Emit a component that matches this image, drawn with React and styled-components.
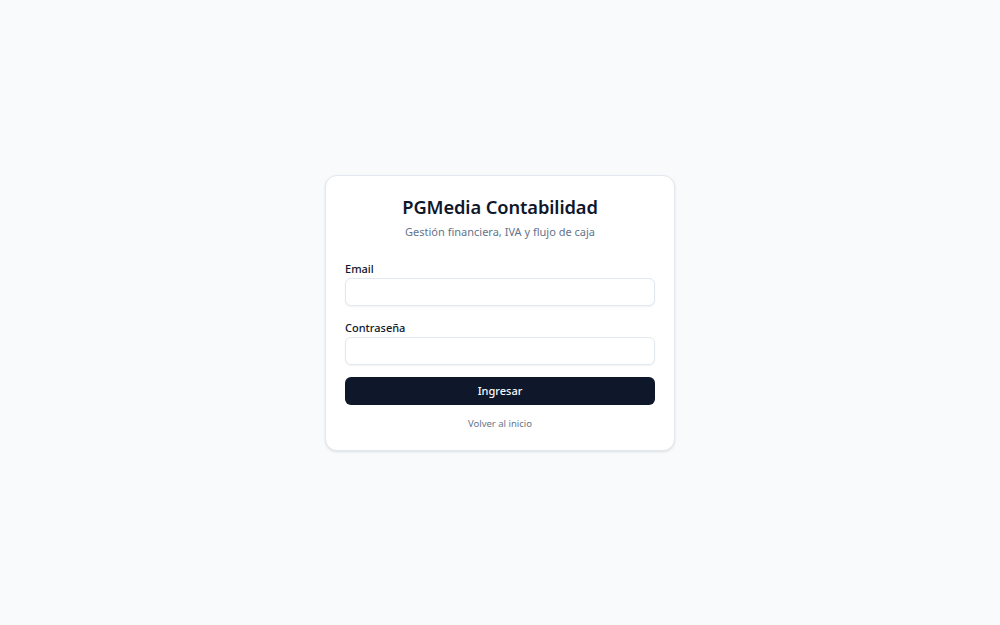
import React from "react";
import styled, { createGlobalStyle } from "styled-components";

const GlobalStyle = createGlobalStyle`
  html, body {
    margin: 0;
    padding: 0;
    background: #f8fafc;
    font-family: "Noto Sans", "Open Sans", sans-serif;
    color: #0f172a;
  }
  * {
    box-sizing: border-box;
  }
`;

const Page = styled.div`
  min-height: 625px;
  display: flex;
  align-items: center;
  justify-content: center;
`;

const Card = styled.form`
  width: 350px;
  background: #ffffff;
  border: 1px solid #e2e8f0;
  border-radius: 12px;
  box-shadow: 0 1px 3px rgba(15, 23, 42, 0.08), 0 1px 2px rgba(15, 23, 42, 0.04);
  padding: 17px 19px 18px;
  display: flex;
  flex-direction: column;
`;

const Header = styled.div`
  text-align: center;
  margin-bottom: 21px;
`;

const Title = styled.h1`
  margin: 0;
  font-size: 18.3px;
  line-height: 28px;
  font-weight: 600;
  letter-spacing: -0.1px;
  color: #0f172a;
`;

const Subtitle = styled.p`
  margin: 3px 0 0;
  font-size: 11px;
  line-height: 16px;
  color: #64748b;
`;

const Field = styled.div`
  display: flex;
  flex-direction: column;
  gap: 1px;
  margin-bottom: ${(p) => p.$gap || 14}px;
`;

const Label = styled.label`
  font-size: 11px;
  line-height: 16px;
  font-weight: 500;
  color: #0f172a;
`;

const Input = styled.input`
  height: 28px;
  width: 100%;
  border: 1px solid #e2e8f0;
  border-radius: 6px;
  background: #ffffff;
  box-shadow: 0 1px 2px rgba(15, 23, 42, 0.05);
  padding: 0 10px;
  font-family: inherit;
  font-size: 11px;
  outline: none;
`;

const Button = styled.button`
  height: 28px;
  width: 100%;
  border: none;
  border-radius: 6px;
  background: #0f172a;
  color: #f8fafc;
  font-family: inherit;
  font-size: 11px;
  font-weight: 500;
  cursor: pointer;
`;

const BackLink = styled.a`
  margin-top: 11px;
  text-align: center;
  font-size: 9.5px;
  line-height: 16px;
  color: #64748b;
  text-decoration: none;
`;

export default function App() {
  return (
    <>
      <GlobalStyle />
      <Page>
        <Card onSubmit={(e) => e.preventDefault()}>
          <Header>
            <Title>PGMedia Contabilidad</Title>
            <Subtitle>Gestión financiera, IVA y flujo de caja</Subtitle>
          </Header>
          <Field>
            <Label htmlFor="email">Email</Label>
            <Input id="email" type="email" />
          </Field>
          <Field $gap={12}>
            <Label htmlFor="password">Contraseña</Label>
            <Input id="password" type="password" />
          </Field>
          <Button type="submit">Ingresar</Button>
          <BackLink href="#">Volver al inicio</BackLink>
        </Card>
      </Page>
    </>
  );
}
